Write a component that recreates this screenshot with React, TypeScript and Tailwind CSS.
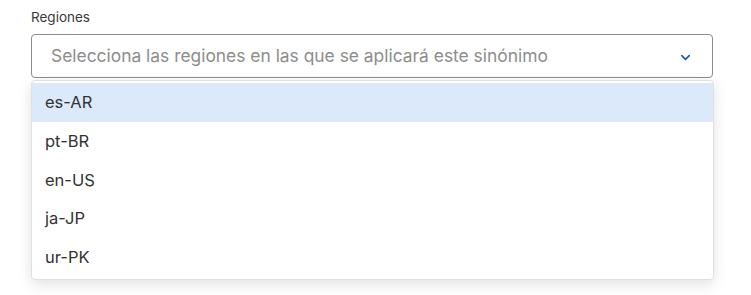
import { ChevronDown } from 'lucide-react';

const regions = ['es-AR', 'pt-BR', 'en-US', 'ja-JP', 'ur-PK'];

export default function App() {
  return (
    <div className="h-[295px] w-[751px] bg-white font-[Inter,sans-serif] text-[#333]">
      <div className="pl-[31px] pr-[38px] pt-[8px]">
        <label className="block text-[13.5px] leading-[18px] text-[#3a3a3a]">Regiones</label>
        <div className="relative mt-[8px]">
          <div className="flex h-[44px] items-center justify-between rounded-[4px] border-[1.5px] border-[#8c8c8c] bg-white pl-[19px] pr-[19px]">
            <span className="text-[17.4px] text-[#8d8d8d]">
              Selecciona las regiones en las que se aplicará este sinónimo
            </span>
            <ChevronDown size={15} strokeWidth={2.6} className="mt-[2px] text-[#1a56c9]" />
          </div>
          <ul className="absolute left-0 right-[-1px] top-[46px] rounded-[4px] border border-[#e0e0e0] bg-white py-[2px] shadow-[0_4px_14px_rgba(0,0,0,0.12)]">
            {regions.map((r, i) => (
              <li
                key={r}
                className={`flex h-[38.8px] items-center pl-[13px] text-[16.5px] text-[#333] ${
                  i === 0 ? 'bg-[#dce9fa]' : ''
                }`}
              >
                {r}
              </li>
            ))}
          </ul>
        </div>
      </div>
    </div>
  );
}
